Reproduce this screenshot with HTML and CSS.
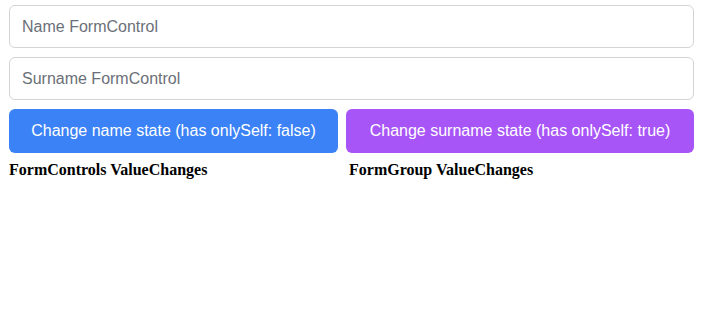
FILE: index.html
```html
<!DOCTYPE html>
<html>
<head>
    <title>Only Self</title>
    <link rel="stylesheet" href="styles.css">
</head>
<body>
    <div class="container">
        <form class="form">
            <input class="field" type="text" placeholder="Name FormControl">
            <input class="field" type="text" placeholder="Surname FormControl">
            <div class="actions">
                <button type="button" class="btn btn-blue">Change name state (has onlySelf: false)</button>
                <button type="button" class="btn btn-purple">Change surname state (has onlySelf: true)</button>
            </div>
        </form>
        <div class="logs">
            <div class="log">
                <h4>FormControls ValueChanges</h4>
            </div>
            <div class="log">
                <h4>FormGroup ValueChanges</h4>
            </div>
        </div>
    </div>
</body>
</html>
```

FILE: styles.css
```css
body {
    margin: 0;
    font-family: 'Liberation Sans', Arial, sans-serif;
    background-color: #fff;
}
.container {
    width: 685px;
    padding: 5px 0 0 9px;
}
.form {
    display: flex;
    flex-direction: column;
    gap: 9px;
}
.field {
    box-sizing: border-box;
    width: 100%;
    height: 43px;
    padding: 0 12px;
    border: 1px solid #d4d4d8;
    border-radius: 6px;
    font-family: inherit;
    font-size: 16px;
    color: #333;
}
.field::placeholder {
    color: #6b7078;
}
.actions {
    display: flex;
    gap: 8px;
}
.btn {
    height: 44px;
    border: none;
    border-radius: 6px;
    font-family: inherit;
    font-size: 16px;
    color: #fff;
    cursor: pointer;
}
.btn-blue {
    flex: 0 0 329px;
    background-color: #3b82f6;
}
.btn-purple {
    flex: 1 1 auto;
    background-color: #a855f7;
}
.logs {
    display: flex;
}
.log {
    width: 340px;
}
.log h4 {
    margin: 8px 0 0;
    font-family: 'Liberation Serif', 'Times New Roman', serif;
    font-size: 16px;
    font-weight: bold;
}
```
